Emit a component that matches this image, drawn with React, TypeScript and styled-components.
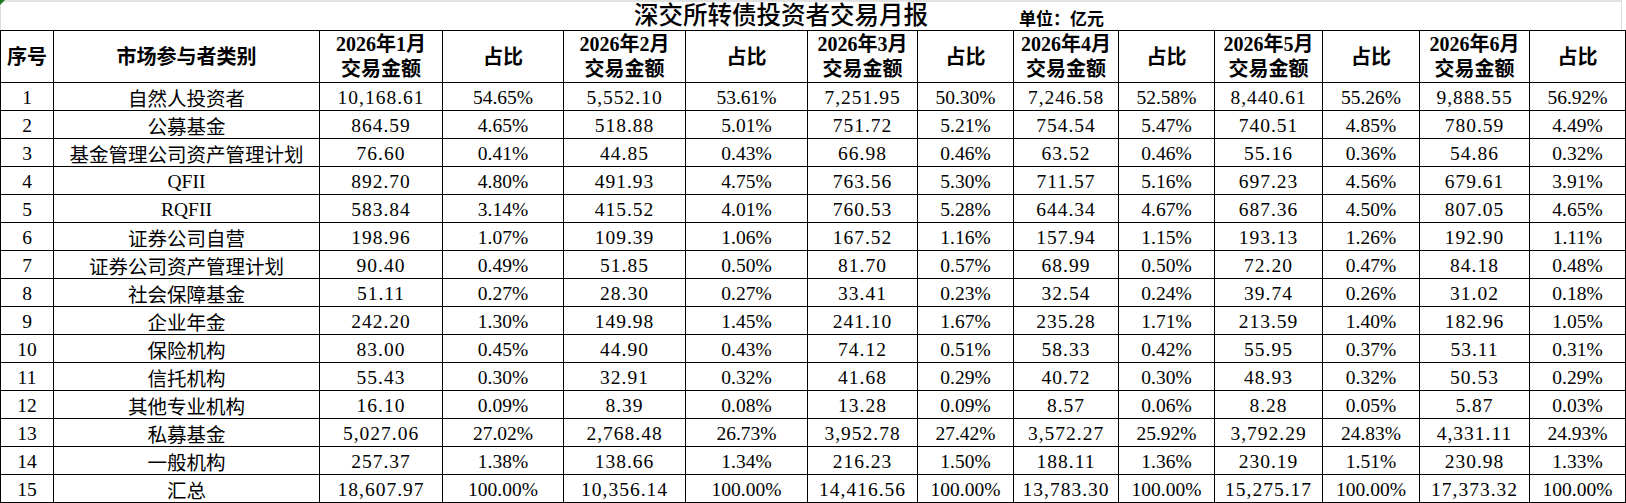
import React from 'react'
import styled, { createGlobalStyle } from 'styled-components'

const GlobalStyle = createGlobalStyle`
  html, body {
    margin: 0;
    padding: 0;
    background: #ffffff;
  }
`

const COLS = '53px 266px 123px 121px 122px 122px 110px 96px 105px 96px 108px 97px 110px 96px'
const FONT = `"Liberation Serif", "Noto Sans CJK SC", serif`

const Sheet = styled.div`
  position: relative;
  width: 1626px;
  height: 503px;
  font-family: ${FONT};
  color: #000;

  &::before {
    content: '';
    position: absolute;
    left: 0;
    top: 0;
    border-top: 5px solid #1f7a1f;
    border-right: 5px solid transparent;
  }
`

const TitleRow = styled.div`
  display: grid;
  grid-template-columns: ${COLS};
  height: 30px;
  box-sizing: border-box;
  border-top: 2px solid #e2e2e2;
  border-left: 1px solid #dcdcdc;
  margin-right: 4px;
  border-right: 1px solid #dcdcdc;
`

const Title = styled.div`
  grid-column: 4 / 10;
  grid-row: 1;
  align-self: end;
  text-align: center;
  font-size: 24.5px;
  font-weight: 500;
  line-height: 26px;
  padding-bottom: 1px;
`

const Unit = styled.div`
  grid-column: 9 / 11;
  grid-row: 1;
  align-self: end;
  padding-left: 5px;
  font-size: 17px;
  font-weight: 700;
  line-height: 20px;
`

const Table = styled.div`
  display: grid;
  grid-template-columns: ${COLS};
  grid-template-rows: 52px;
  grid-auto-rows: 28px;
  border-top: 1px solid #000;
  border-left: 1px solid #000;
`

const Cell = styled.div<{ $amount?: boolean }>`
  box-sizing: border-box;
  display: flex;
  align-items: center;
  justify-content: center;
  border-right: 1px solid #000;
  border-bottom: 1px solid #000;
  font-size: 19.5px;
  white-space: nowrap;
  padding-top: 2px;
  letter-spacing: ${(p) => (p.$amount ? '1px' : '0')};
`

const HeadCell = styled(Cell)`
  flex-direction: column;
  font-size: 20px;
  font-weight: 700;
  line-height: 25px;
  text-align: center;
  padding-top: 1px;
`

const months = [1, 2, 3, 4, 5, 6]

const rows: string[][] = [
  ['1', '自然人投资者', '10,168.61', '54.65%', '5,552.10', '53.61%', '7,251.95', '50.30%', '7,246.58', '52.58%', '8,440.61', '55.26%', '9,888.55', '56.92%'],
  ['2', '公募基金', '864.59', '4.65%', '518.88', '5.01%', '751.72', '5.21%', '754.54', '5.47%', '740.51', '4.85%', '780.59', '4.49%'],
  ['3', '基金管理公司资产管理计划', '76.60', '0.41%', '44.85', '0.43%', '66.98', '0.46%', '63.52', '0.46%', '55.16', '0.36%', '54.86', '0.32%'],
  ['4', 'QFII', '892.70', '4.80%', '491.93', '4.75%', '763.56', '5.30%', '711.57', '5.16%', '697.23', '4.56%', '679.61', '3.91%'],
  ['5', 'RQFII', '583.84', '3.14%', '415.52', '4.01%', '760.53', '5.28%', '644.34', '4.67%', '687.36', '4.50%', '807.05', '4.65%'],
  ['6', '证券公司自营', '198.96', '1.07%', '109.39', '1.06%', '167.52', '1.16%', '157.94', '1.15%', '193.13', '1.26%', '192.90', '1.11%'],
  ['7', '证券公司资产管理计划', '90.40', '0.49%', '51.85', '0.50%', '81.70', '0.57%', '68.99', '0.50%', '72.20', '0.47%', '84.18', '0.48%'],
  ['8', '社会保障基金', '51.11', '0.27%', '28.30', '0.27%', '33.41', '0.23%', '32.54', '0.24%', '39.74', '0.26%', '31.02', '0.18%'],
  ['9', '企业年金', '242.20', '1.30%', '149.98', '1.45%', '241.10', '1.67%', '235.28', '1.71%', '213.59', '1.40%', '182.96', '1.05%'],
  ['10', '保险机构', '83.00', '0.45%', '44.90', '0.43%', '74.12', '0.51%', '58.33', '0.42%', '55.95', '0.37%', '53.11', '0.31%'],
  ['11', '信托机构', '55.43', '0.30%', '32.91', '0.32%', '41.68', '0.29%', '40.72', '0.30%', '48.93', '0.32%', '50.53', '0.29%'],
  ['12', '其他专业机构', '16.10', '0.09%', '8.39', '0.08%', '13.28', '0.09%', '8.57', '0.06%', '8.28', '0.05%', '5.87', '0.03%'],
  ['13', '私募基金', '5,027.06', '27.02%', '2,768.48', '26.73%', '3,952.78', '27.42%', '3,572.27', '25.92%', '3,792.29', '24.83%', '4,331.11', '24.93%'],
  ['14', '一般机构', '257.37', '1.38%', '138.66', '1.34%', '216.23', '1.50%', '188.11', '1.36%', '230.19', '1.51%', '230.98', '1.33%'],
  ['15', '汇总', '18,607.97', '100.00%', '10,356.14', '100.00%', '14,416.56', '100.00%', '13,783.30', '100.00%', '15,275.17', '100.00%', '17,373.32', '100.00%'],
]

export default function App() {
  return (
    <>
      <GlobalStyle />
      <Sheet>
        <TitleRow>
          <Title>深交所转债投资者交易月报</Title>
          <Unit>单位：亿元</Unit>
        </TitleRow>
        <Table>
          <HeadCell>序号</HeadCell>
          <HeadCell>市场参与者类别</HeadCell>
          {months.map((m) => (
            <React.Fragment key={m}>
              <HeadCell>
                <span>2026年{m}月</span>
                <span>交易金额</span>
              </HeadCell>
              <HeadCell>占比</HeadCell>
            </React.Fragment>
          ))}
          {rows.map((row) =>
            row.map((value, i) => (
              <Cell key={row[0] + '-' + i} $amount={i >= 2 && i % 2 === 0}>
                {value}
              </Cell>
            ))
          )}
        </Table>
      </Sheet>
    </>
  )
}
